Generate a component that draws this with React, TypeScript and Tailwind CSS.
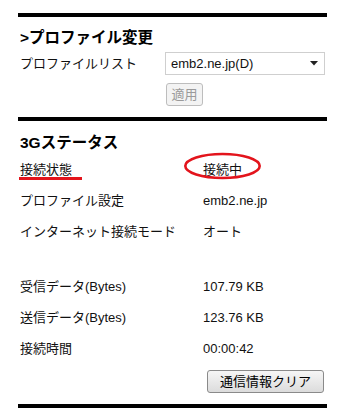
import React from "react";

const jp = { fontFamily: '"Liberation Sans", "Noto Sans CJK JP", sans-serif' };

function Row({ label, value }: { label: React.ReactNode; value?: React.ReactNode }) {
  return (
    <div className="flex h-[31px] items-center text-[13px] text-[#111]">
      <div className="w-[185px] pl-[2px] relative">{label}</div>
      <div className="relative text-[#111]">{value}</div>
    </div>
  );
}

export default function App() {
  return (
    <div className="w-[338px] h-[415px] bg-white overflow-hidden" style={jp}>
      <div className="ml-[18px] w-[309px] pt-[13px]">
        <div className="h-[4px] bg-black" />
        <div className="pl-[2px] pt-[11px] h-[35px] text-[15.5px] leading-[20px] font-bold text-black">
          &gt;プロファイル変更
        </div>
        <div className="flex items-center h-[23px] text-[13px] text-[#111]">
          <div className="w-[147px] pl-[2px]">プロファイルリスト</div>
          <div className="w-[160px] h-[23px] border border-[#cfcfcf] bg-white flex items-center pl-[5px] pr-[6px] justify-between">
            <span className="text-[13px]">emb2.ne.jp(D)</span>
            <svg width="8" height="5" viewBox="0 0 8 5"><path d="M0 0 L8 0 L4 4.5 Z" fill="#222" /></svg>
          </div>
        </div>
        <div className="pl-[148px] pt-[8px] h-[42px]">
          <div className="w-[37px] h-[23px] border border-[#bdbdbd] rounded-[3px] bg-[#f3f3f3] text-[#9a9a9a] text-[13px] flex items-center justify-center">
            適用
          </div>
        </div>
        <div className="h-[4px] bg-black" />
        <div className="pl-[2px] pt-[12px] h-[33px] text-[15.5px] leading-[20px] font-bold text-black">
          3Gステータス
        </div>
        <Row
          label={
            <span className="relative inline-block">
              接続状態
              <span className="absolute left-[-1px] top-[17px] w-[63px] h-[3px] bg-[#e3141c]" />
            </span>
          }
          value={
            <span className="relative inline-block">
              接続中
              <svg className="absolute left-[-20px] top-[-8px]" width="80" height="30" viewBox="0 0 80 30">
                <ellipse cx="39.5" cy="14" rx="37.2" ry="12" fill="none" stroke="#e3141c" strokeWidth="2.6" />
              </svg>
            </span>
          }
        />
        <Row label="プロファイル設定" value="emb2.ne.jp" />
        <Row label="インターネット接続モード" value="オート" />
        <div className="h-[24px]" />
        <Row label="受信データ(Bytes)" value="107.79 KB" />
        <Row label="送信データ(Bytes)" value="123.76 KB" />
        <Row label="接続時間" value="00:00:42" />
        <div className="pl-[189px] pt-[6px] h-[40px]">
          <div className="w-[117px] h-[23px] border border-[#8a8a8a] rounded-[3px] bg-gradient-to-b from-[#f6f6f6] to-[#dcdcdc] text-[13px] text-black flex items-center justify-center">
            通信情報クリア
          </div>
        </div>
        <div className="h-[4px] bg-black" />
      </div>
    </div>
  );
}
